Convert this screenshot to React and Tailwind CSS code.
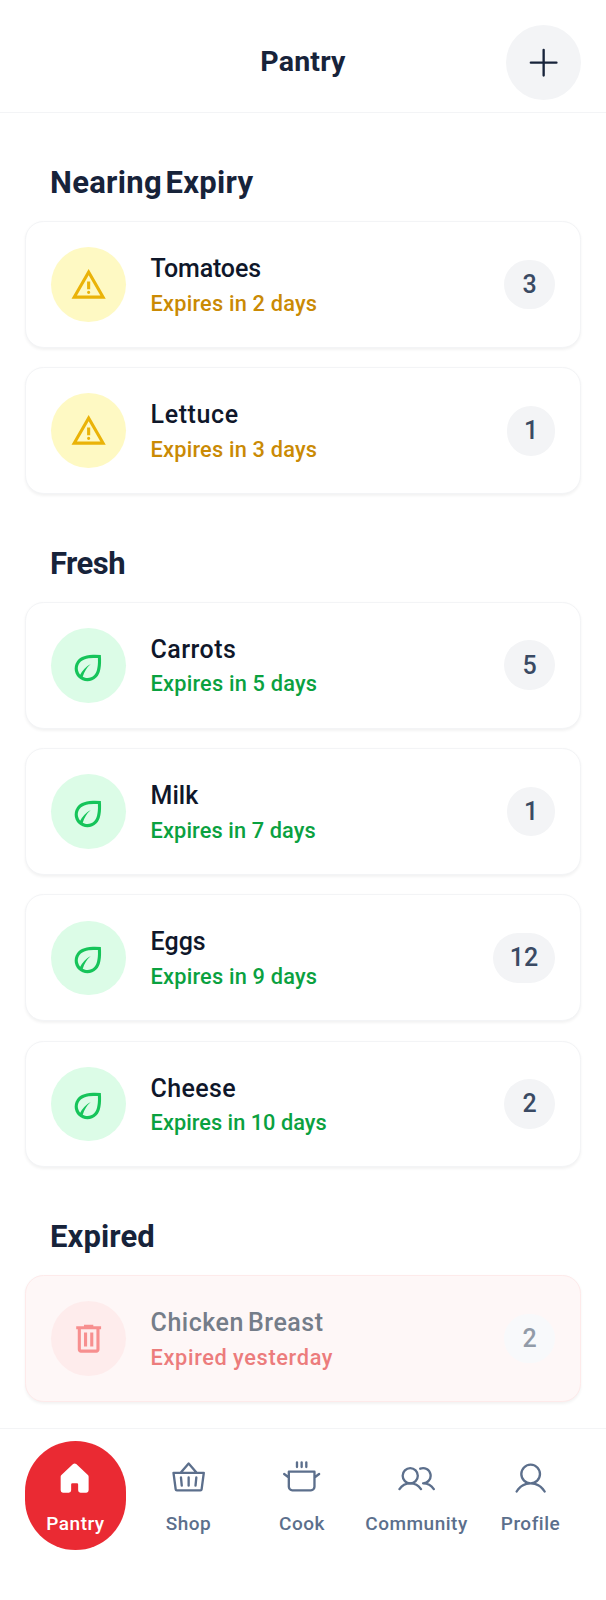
import { PiBasket, PiPlus, PiUser } from "react-icons/pi";

const ICONS = {
  warning:
    "m40-120 440-760 440 760H40Zm138-80h604L480-720 178-200Zm302-40q17 0 28.5-11.5T520-280q0-17-11.5-28.5T480-320q-17 0-28.5 11.5T440-280q0 17 11.5 28.5T480-240Zm-40-120h80v-200h-80v200Z",
  eco:
    "M216-176q-45-45-70.5-104T120-402q0-63 24-124.5T222-642q35-35 86.5-60t122-39.5Q501-756 591.5-759t202.5 7q8 106 5 195t-16.5 160.5q-13.5 71.5-38 125T684-182q-53 53-112.5 77.5T450-80q-65 0-127-25.5T216-176Zm112-16q29 17 59.5 24.5T450-160q46 0 91-18.5t86-59.5q18-18 36.5-50.5t32-85Q709-426 716-500.5t2-177.5q-49-2-110.5-1.5T485-670q-61 9-116 29t-90 55q-45 45-62 89t-17 85q0 59 22.5 103.5T262-246q42-80 111-153.5T534-520q-72 63-125.5 142.5T328-192Z",
  trash:
    "M280-120q-33 0-56.5-23.5T200-200v-520h-40v-80h200v-40h240v40h200v80h-40v520q0 33-23.5 56.5T680-120H280Zm400-600H280v520h400v-520ZM360-280h80v-360h-80v360Zm160 0h80v-360h-80v360Z",
};

const SECTIONS = [
  {
    title: "Nearing Expiry",
    titleClass: "tracking-[0.3px] [word-spacing:-4.5px]",
    icon: "warning",
    circle: "bg-[#fef9c3] text-[#eab308]",
    note: "text-[#ca8a04]",
    items: [
      { name: "Tomatoes", status: "Expires in 2 days", count: 3, nameClass: "tracking-[-0.15px]" },
      { name: "Lettuce", status: "Expires in 3 days", count: 1, nameClass: "tracking-[0.6px]" },
    ],
  },
  {
    title: "Fresh",
    titleClass: "tracking-[-0.55px]",
    icon: "eco",
    circle: "bg-[#dcfce7] text-[#16c45a]",
    note: "text-[#0aa13f]",
    items: [
      { name: "Carrots", status: "Expires in 5 days", count: 5, nameClass: "tracking-[0.45px]" },
      { name: "Milk", status: "Expires in 7 days", count: 1, statusClass: "tracking-[0.12px]" },
      { name: "Eggs", status: "Expires in 9 days", count: 12 },
      {
        name: "Cheese",
        status: "Expires in 10 days",
        count: 2,
        nameClass: "tracking-[0.35px]",
        statusClass: "tracking-[0.03px]",
      },
    ],
  },
  {
    title: "Expired",
    titleClass: "tracking-[0.1px]",
    icon: "trash",
    expired: true,
    circle: "bg-[#feecec] text-[#f78f8f]",
    note: "text-[#ec7c7c]",
    items: [
      {
        name: "Chicken Breast",
        status: "Expired yesterday",
        count: 2,
        nameClass: "tracking-[0.5px] [word-spacing:-2.5px]",
        statusClass: "tracking-[0.65px] [word-spacing:-0.5px]",
      },
    ],
  },
];

function badgeWidth(count) {
  if (count > 9) return "w-[62px]";
  return count === 1 ? "w-[48px]" : "w-[51px]";
}

function Item({ item, section }) {
  const { expired } = section;
  return (
    <li
      className={`flex h-[126.9px] items-center gap-[25px] rounded-[18.6px] border-[1.5px] px-[25px] shadow-[0_1.5px_3px_rgba(0,0,0,0.05)] ${
        expired ? "border-[#feeaea] bg-[#fef7f7]" : "border-[#f3f4f6] bg-white"
      }`}
    >
      <div className={`flex size-[74.6px] shrink-0 items-center justify-center rounded-full ${section.circle}`}>
        <svg viewBox="0 -960 960 960" className="size-[37.3px] fill-current">
          <path d={ICONS[section.icon]} />
        </svg>
      </div>
      <div className="flex-1 pt-[1.6px]">
        <p
          className={`text-[25px] leading-[36.6px] font-medium ${expired ? "text-[#757d89]" : "text-[#0f172a]"} ${item.nameClass ?? ""}`}
        >
          {item.name}
        </p>
        <p className={`text-[21.75px] leading-[32px] font-medium ${section.note} ${item.statusClass ?? "tracking-[0.2px]"}`}>
          {item.status}
        </p>
      </div>
      <span
        className={`flex h-[49.7px] items-center justify-center rounded-full text-[25px] font-medium ${badgeWidth(item.count)} ${
          expired ? "bg-[#f8f9fb] text-[#929ba8]" : "bg-[#f3f4f6] text-[#3a4a63]"
        }`}
      >
        {item.count}
      </span>
    </li>
  );
}

function HouseIcon({ className }) {
  return (
    <svg viewBox="0 0 256 256" className={`mr-[2px] ${className}`} fill="currentColor">
      <path d="M224,115.55V208a16,16,0,0,1-16,16H168a16,16,0,0,1-16-16V168a8,8,0,0,0-8-8H112a8,8,0,0,0-8,8v40a16,16,0,0,1-16,16H48a16,16,0,0,1-16-16V115.55a16,16,0,0,1,5.17-11.78l80-75.48.11-.11a16,16,0,0,1,21.53,0,1.14,1.14,0,0,0,.11.11l80,75.48A16,16,0,0,1,224,115.55Z" />
    </svg>
  );
}

function PotIcon({ className }) {
  return (
    <svg
      viewBox="0 0 256 256"
      className={`overflow-visible ${className}`}
      fill="none"
      stroke="currentColor"
      strokeWidth="16"
      strokeLinecap="round"
      strokeLinejoin="round"
    >
      <path d="M96 16v32M128 16v32M160 16v32M40 80h176v104a24 24 0 0 1-24 24H64a24 24 0 0 1-24-24ZM8 96l32 24M248 96l-32 24" />
    </svg>
  );
}

function PeopleIcon({ className }) {
  return (
    <svg
      viewBox="0 0 256 256"
      className={className}
      fill="none"
      stroke="currentColor"
      strokeWidth="16"
      strokeLinecap="round"
      strokeLinejoin="round"
    >
      <circle cx="84" cy="108" r="52" />
      <path d="M10.23 200a88 88 0 0 1 147.54 0M172 160a87.93 87.93 0 0 1 73.77 40M152.69 59.7A52 52 0 1 1 172 160" />
    </svg>
  );
}

const TABS = [
  { label: "Pantry", Icon: HouseIcon, box: "w-[101px] rounded-full bg-[#ea2a33] text-white" },
  { label: "Shop", Icon: PiBasket, box: "w-[125px] text-[#5c6f8c]" },
  { label: "Cook", Icon: PotIcon, box: "w-[102px] text-[#5c6f8c]" },
  { label: "Community", Icon: PeopleIcon, box: "w-[127px] text-[#5c6f8c]" },
  { label: "Profile", Icon: PiUser, box: "w-[101px] text-[#5c6f8c]" },
];

export default function App() {
  return (
    <div className="flex h-[1600px] w-[606px] flex-col overflow-hidden bg-white font-['Roboto',sans-serif]">
      <header className="flex h-[113.4px] shrink-0 items-start justify-between border-b-[1.5px] border-[#f3f4f6] px-[25px] pt-[25px]">
        <div className="w-[74.6px]" />
        <h1 className="text-[28.5px] leading-[74px] font-bold tracking-[0.2px] text-[#17233a]">Pantry</h1>
        <button className="flex size-[74.6px] items-center justify-center rounded-full bg-[#f3f4f6] text-[#17233a]">
          <PiPlus className="size-[37.3px]" />
        </button>
      </header>
      <main className="flex-1 px-[25px]">
        {SECTIONS.map((section) => (
          <section key={section.title}>
            <h2
              className={`flex h-[107.7px] items-end px-[25px] pb-[18.7px] text-[31px] leading-[39px] font-bold text-[#17233a] ${section.titleClass}`}
            >
              {section.title}
            </h2>
            <ul className="flex flex-col gap-[19.35px]">
              {section.items.map((item) => (
                <Item key={item.name} item={item} section={section} />
              ))}
            </ul>
          </section>
        ))}
      </main>
      <nav className="flex h-[172.4px] shrink-0 items-start border-t-[1.5px] border-[#f3f4f6] px-[25px] pt-[12.4px]">
        {TABS.map(({ label, Icon, box }) => (
          <a key={label} className={`flex h-[109px] shrink-0 flex-col items-center gap-[8px] pt-[18.6px] ${box}`}>
            <Icon className="size-[37.3px]" />
            <span className="text-[19px] leading-[37px] font-medium tracking-[0.5px]">{label}</span>
          </a>
        ))}
      </nav>
    </div>
  );
}
